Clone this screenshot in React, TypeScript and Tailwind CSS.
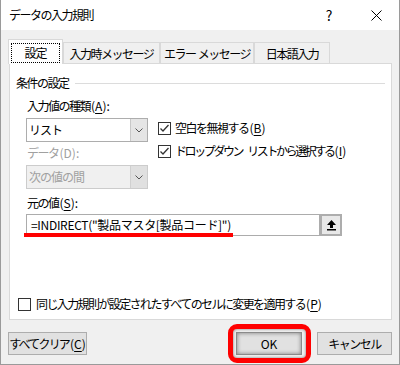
import React from 'react';

const font = { fontFamily: '"Noto Sans CJK JP", "Noto Sans", sans-serif' };

const Check = () => (
  <svg width="13" height="13" viewBox="0 0 13 13" className="shrink-0">
    <rect x="0.5" y="0.5" width="12" height="12" fill="#fff" stroke="#333" />
    <polyline points="2.5,6.5 5,9 10.5,3" fill="none" stroke="#333" strokeWidth="1.3" />
  </svg>
);

const Chevron = ({ color }: { color: string }) => (
  <svg width="8" height="5" viewBox="0 0 8 5">
    <polyline points="0.5,0.5 4,4 7.5,0.5" fill="none" stroke={color} strokeWidth="1" />
  </svg>
);

// access key in parentheses, latin spacing kept normal
const Key = ({ k, u = true, after = '' }: { k: string; u?: boolean; after?: string }) => (
  <span className="tracking-normal ml-[1px]">
    (<span className={u ? 'underline underline-offset-2' : ''}>{k}</span>){after}
  </span>
);

export default function App() {
  return (
    <div
      className="w-[400px] h-[365px] flex flex-col bg-[#f0f0f0] border-x border-b border-[#9a9a9a] text-[12px] text-black overflow-hidden"
      style={font}
    >
      {/* Title bar */}
      <div className="h-[30px] shrink-0 bg-white flex items-center pl-[8px]">
        <span className="tracking-[-1.5px] text-[12px]">データの入力規則</span>
        <span className="ml-auto w-[20px] text-center text-[14px] mr-[32px]">?</span>
        <svg width="11" height="11" viewBox="0 0 11 11" className="mr-[17px]">
          <path d="M0.5 0.5 L10.5 10.5 M10.5 0.5 L0.5 10.5" stroke="#000" strokeWidth="1" />
        </svg>
      </div>

      <div className="flex flex-col px-[7px]">
        {/* Tabs */}
        <div className="flex items-end pt-[9px] relative z-10 -mb-px">
          <div className="w-[55px] h-[25px] bg-white border border-b-0 border-[#d9d9d9] flex pt-[3px] px-[2px] pb-[1px]">
            <div className="flex-1 border border-dotted border-black flex items-center justify-center tracking-[-1px]">設定</div>
          </div>
          <div className="w-[97px] h-[22px] border border-b-0 border-[#d9d9d9] flex items-center justify-center tracking-[-1.5px]">入力時メッセージ</div>
          <div className="w-[94px] h-[22px] border border-b-0 border-[#d9d9d9] flex items-center justify-center tracking-[-1.5px] whitespace-pre">エラー  メッセージ</div>
          <div className="w-[76px] h-[22px] border border-b-0 border-[#d9d9d9] flex items-center justify-center tracking-[-1.5px]">日本語入力</div>
        </div>

        {/* Panel */}
        <div className="h-[257px] w-[383px] ml-px bg-white border border-[#d9d9d9] flex flex-col">
          <div className="flex items-center h-[16px] mt-[11px] pl-[6px] pr-[6px]">
            <span className="tracking-[-1.5px]">条件の設定</span>
            <div className="flex-1 h-px bg-[#dcdcdc] ml-[6px]" />
          </div>

          <div className="flex mt-[7px] pl-[16px]">
            <div className="flex flex-col w-[122px]">
              <div className="h-[16px] flex items-center tracking-[-1.5px] ml-px whitespace-nowrap">
                入力値の種類<Key k="A" after=":" />
              </div>
              <div className="mt-[4px] h-[24px] flex border border-[#adadad] bg-white">
                <div className="flex-1 flex items-center pl-[2px] tracking-[-1px]">リスト</div>
                <div className="w-[17px] bg-[#e5e5e5] border-l border-[#c8c8c8] flex items-center justify-center">
                  <Chevron color="#555" />
                </div>
              </div>
              <div className="mt-[3px] h-[16px] flex items-center text-[#a0a0a0] tracking-[-1.5px] ml-px">
                データ<Key k="D" u={false} after=":" />
              </div>
              <div className="mt-[4px] h-[24px] flex border border-[#cccccc] bg-[#f0f0f0]">
                <div className="flex-1 flex items-center pl-[2px] text-[#a0a0a0] tracking-[-1px]">次の値の間</div>
                <div className="w-[17px] bg-[#e0e0e0] border-l border-[#d0d0d0] flex items-center justify-center">
                  <Chevron color="#555" />
                </div>
              </div>
            </div>
            <div className="flex flex-col pt-[22px] pl-[10px] gap-[7px]">
              <div className="h-[16px] flex items-center gap-[4px] whitespace-nowrap">
                <Check />
                <span className="tracking-[-1.5px]">空白を無視する<Key k="B" /></span>
              </div>
              <div className="h-[16px] flex items-center gap-[4px] whitespace-nowrap">
                <Check />
                <span className="tracking-[-2.4px]">
                  ドロップダウン<span className="inline-block w-[5px]" />リストから選択する<Key k="I" />
                </span>
              </div>
            </div>
          </div>

          <div className="mt-[6px] pl-[17px] h-[16px] flex items-center tracking-[-1.5px]">
            元の値<Key k="S" after=":" />
          </div>
          <div className="mt-[3px] ml-[16px] flex relative">
            <div className="w-[294px] h-[22px] border border-[#acacac] bg-white flex items-center pl-[4px] tracking-[-0.3px] whitespace-nowrap">
              =INDIRECT("製品マスタ[製品コード]")
            </div>
            <div className="w-[22px] h-[22px] border-2 border-[#adadad] bg-[#e8e8e8] flex items-center justify-center">
              <svg width="11" height="12" viewBox="0 0 11 12">
                <path d="M5.5 1 L10 6 L7 6 L7 9 L4 9 L4 6 L1 6 Z" fill="#000" />
                <rect x="1" y="10" width="9" height="1.5" fill="#000" />
              </svg>
            </div>
            <div className="absolute left-[-2px] top-[19px] w-[209px] h-[4px] bg-[#ff0000]" />
          </div>

          <div className="mt-auto mb-[7px] pl-[8px] h-[16px] flex items-center gap-[5px] whitespace-nowrap">
            <svg width="13" height="13" viewBox="0 0 13 13" className="shrink-0">
              <rect x="0.5" y="0.5" width="12" height="12" fill="#fff" stroke="#333" />
            </svg>
            <span className="tracking-[-1.6px]">同じ入力規則が設定されたすべてのセルに変更を適用する<Key k="P" /></span>
          </div>
        </div>

        {/* Buttons */}
        <div className="flex mt-[12px] items-center">
          <button className="w-[79px] h-[23px] bg-[#e1e1e1] border border-[#adadad] flex items-center justify-center whitespace-nowrap">
            <span className="tracking-[-1.8px]">すべてクリア<Key k="C" /></span>
          </button>
          <div className="relative ml-auto">
            <button className="w-[66px] h-[23px] bg-[#e1e1e1] border border-[#8a8a8a] flex items-center justify-center shadow-[inset_0_0_4px_rgba(0,0,0,0.45)]">
              OK
            </button>
            <div className="absolute left-[-8px] top-[-8px] right-[-9px] bottom-[-8px] border-[5px] border-[#ff0000] rounded-[9px] shadow-[inset_0_0_3px_rgba(0,0,0,0.5)]" />
          </div>
          <button className="ml-[15px] w-[75px] h-[23px] bg-[#e1e1e1] border border-[#adadad] flex items-center justify-center tracking-[-1.5px] whitespace-nowrap">
            キャンセル
          </button>
        </div>
      </div>
    </div>
  );
}
